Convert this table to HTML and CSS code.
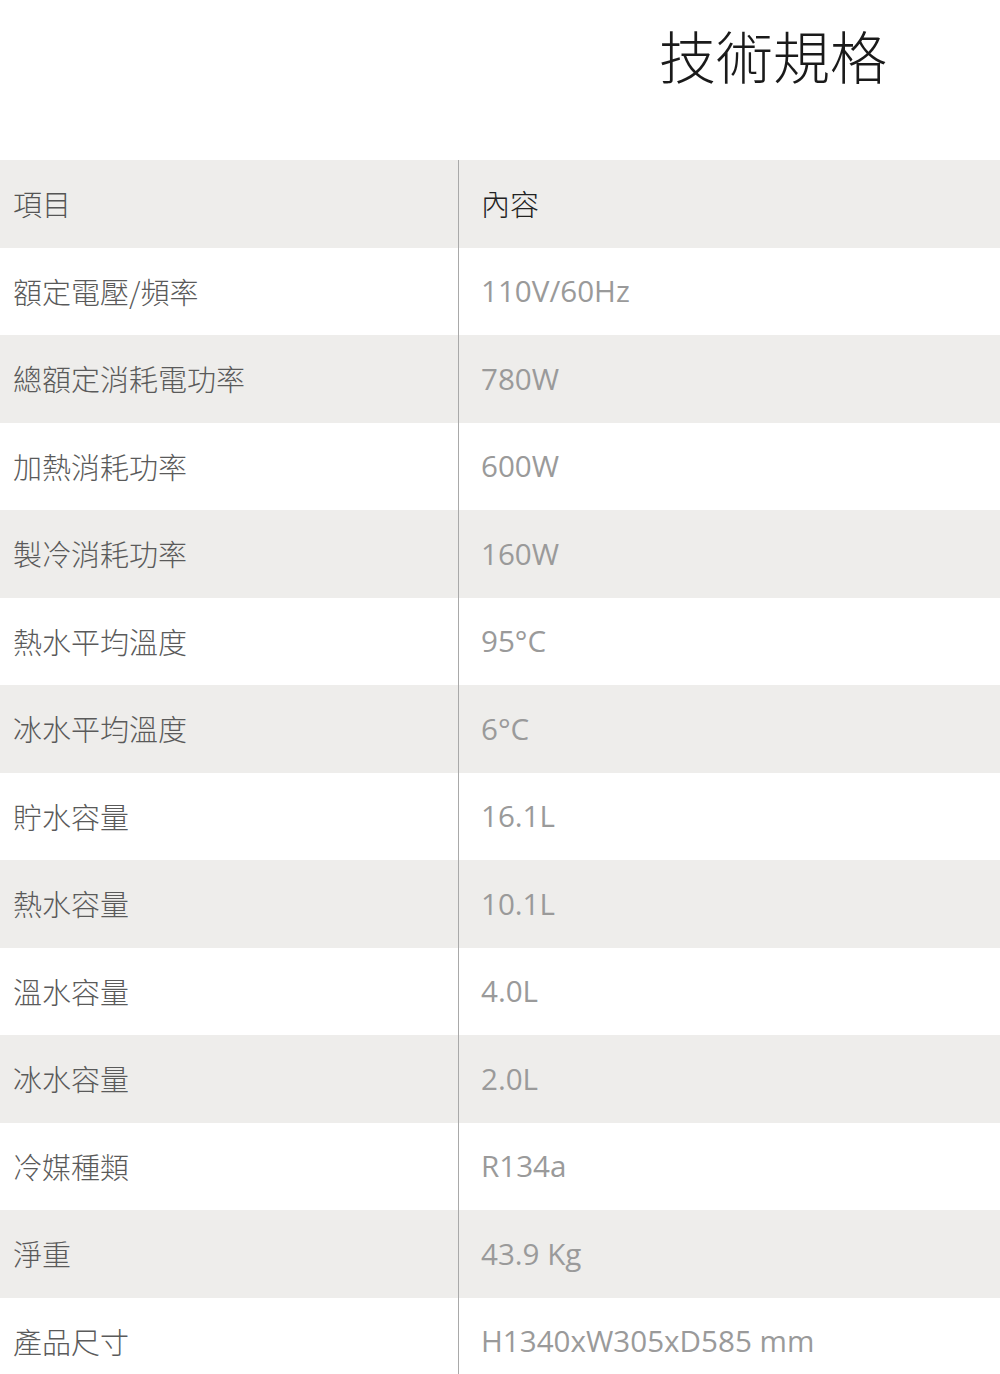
FILE: index.html
```html
<!DOCTYPE html>
<html lang="zh-Hant">
<head>
<meta charset="utf-8">
<title>技術規格</title>
<link rel="stylesheet" href="styles.css">
</head>
<body>
<header class="title-bar">
  <h1 class="title">技術規格</h1>
</header>
<div class="spec">
  <div class="row head"><div class="key">項目</div><div class="val">內容</div></div>
  <div class="row"><div class="key">額定電壓/頻率</div><div class="val">110V/60Hz</div></div>
  <div class="row alt"><div class="key">總額定消耗電功率</div><div class="val">780W</div></div>
  <div class="row"><div class="key">加熱消耗功率</div><div class="val">600W</div></div>
  <div class="row alt"><div class="key">製冷消耗功率</div><div class="val">160W</div></div>
  <div class="row"><div class="key">熱水平均溫度</div><div class="val">95°C</div></div>
  <div class="row alt"><div class="key">冰水平均溫度</div><div class="val">6°C</div></div>
  <div class="row"><div class="key">貯水容量</div><div class="val">16.1L</div></div>
  <div class="row alt"><div class="key">熱水容量</div><div class="val">10.1L</div></div>
  <div class="row"><div class="key">溫水容量</div><div class="val">4.0L</div></div>
  <div class="row alt"><div class="key">冰水容量</div><div class="val">2.0L</div></div>
  <div class="row"><div class="key">冷媒種類</div><div class="val">R134a</div></div>
  <div class="row alt"><div class="key">淨重</div><div class="val">43.9 Kg</div></div>
  <div class="row"><div class="key">產品尺寸</div><div class="val">H1340xW305xD585 mm</div></div>
</div>
</body>
</html>
```

FILE: styles.css
```css
html, body {
  margin: 0;
  padding: 0;
  background: #ffffff;
}
body {
  font-family: "Open Sans", "Noto Sans CJK TC", sans-serif;
  width: 1000px;
}
.title-bar {
  height: 160px;
  display: flex;
  justify-content: flex-end;
  padding-right: 113px;
  box-sizing: border-box;
}
.title {
  margin: 16px 0 0 0;
  font-family: "Noto Sans CJK TC", sans-serif;
  font-weight: 300;
  font-size: 57px;
  line-height: 76px;
  color: #1a1a1a;
}
.spec {
  display: flex;
  flex-direction: column;
}
.row {
  display: grid;
  grid-template-columns: 459px 1fr;
  height: 87.5px;
  background: #ffffff;
}
.row.head, .row.alt {
  background: #eeedeb;
}
.key, .val {
  display: flex;
  align-items: center;
  font-size: 29px;
  line-height: 1;
}
.key {
  padding-left: 13px;
  color: #5a5a5a;
  font-family: "Noto Sans CJK TC", sans-serif;
  font-weight: 300;
  border-right: 1px solid #a9a9a9;
}
.val {
  padding-left: 22px;
  color: #9a9a9a;
  font-size: 29.6px;
  font-family: "Open Sans", "Noto Sans CJK TC", sans-serif;
}
.head .key {
  color: #555555;
}
.head .val {
  color: #222222;
  font-size: 29px;
  font-weight: 300;
  font-family: "Noto Sans CJK TC", sans-serif;
}
```
